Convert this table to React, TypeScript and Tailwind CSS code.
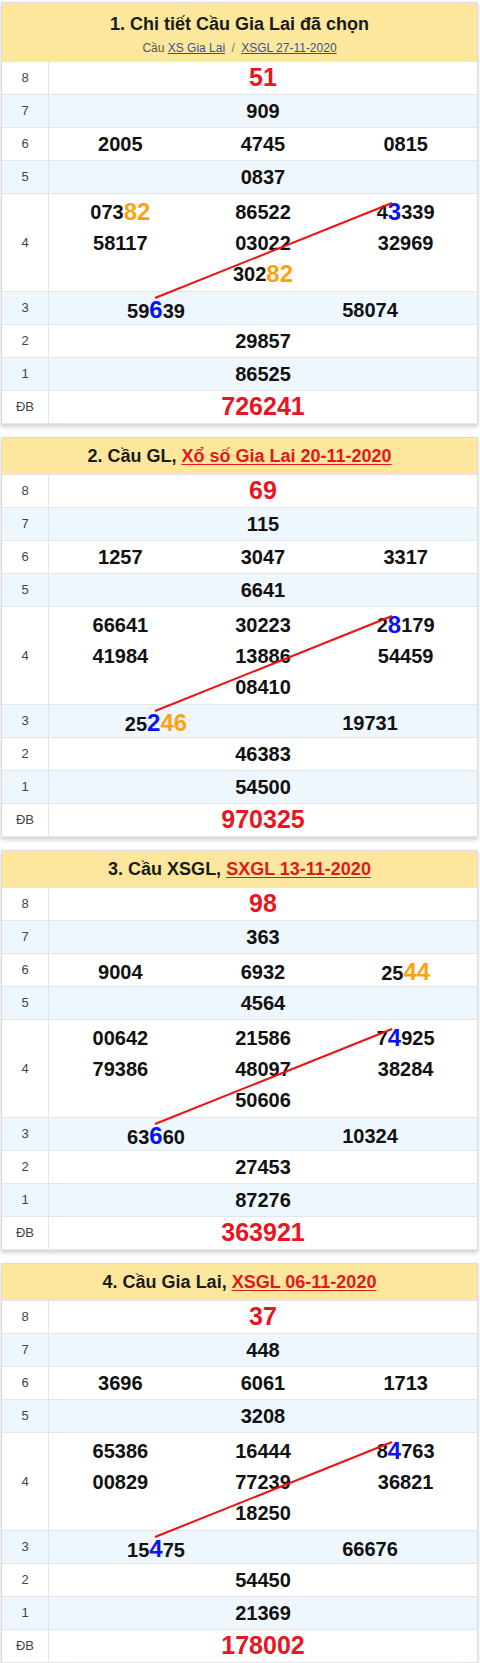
import React from "react";

type Card = {
  title: React.ReactNode;
  rows: {
    g8: string;
    g7: string;
    g6: string[];
    g5: string;
    g4: string[][];
    g3: string[];
    g2: string;
    g1: string;
    db: string;
  };
};

// "{..}" = orange digits, "<..>" = blue digits
const renderNum = (s: string) => {
  const parts: React.ReactNode[] = [];
  const re = /(\{[^}]*\}|<[^>]*>)/g;
  let last = 0;
  let m: RegExpExecArray | null;
  let i = 0;
  while ((m = re.exec(s))) {
    if (m.index > last) parts.push(<span key={i++}>{s.slice(last, m.index)}</span>);
    const inner = m[0].slice(1, -1);
    if (m[0][0] === "{") {
      parts.push(
        <span key={i++} className="text-[24px] text-[#ffa20f]">
          {inner}
        </span>
      );
    } else {
      parts.push(
        <span key={i++} className="text-[24px] text-[#0b12f5]">
          {inner}
        </span>
      );
    }
    last = m.index + m[0].length;
  }
  if (last < s.length) parts.push(<span key={i++}>{s.slice(last)}</span>);
  return parts;
};

const Row = ({
  label,
  blue,
  children,
}: {
  label: string;
  blue?: boolean;
  children: React.ReactNode;
}) => (
  <div
    className={`flex border-b border-[#e2e5ea] ${blue ? "bg-[#eef6fe]" : "bg-white"}`}
  >
    <div className="w-[47px] shrink-0 flex items-center justify-center border-r border-[#e2e5ea] text-[13px] text-[#444]">
      {label}
    </div>
    <div className="flex-1 min-w-0">{children}</div>
  </div>
);

const Single = ({ v, red }: { v: string; red?: boolean }) => (
  <div
    className={`h-[32px] flex items-center justify-center font-bold ${
      red ? "text-[25px] text-[#e8161e]" : "text-[20px] text-[#111]"
    }`}
  >
    {renderNum(v)}
  </div>
);

const Result = ({ card }: { card: Card }) => {
  const r = card.rows;
  return (
    <div className="bg-white border border-[#dcdcdc] shadow-[0_2px_4px_rgba(0,0,0,0.18)]">
      {card.title}
      <div className="relative">
        <Row label="8">
          <Single v={r.g8} red />
        </Row>
        <Row label="7" blue>
          <Single v={r.g7} />
        </Row>
        <Row label="6">
          <div className="grid grid-cols-3 h-[32px] items-center text-center text-[20px] font-bold text-[#111]">
            {r.g6.map((n, i) => (
              <div key={i}>{renderNum(n)}</div>
            ))}
          </div>
        </Row>
        <Row label="5" blue>
          <Single v={r.g5} />
        </Row>
        <Row label="4">
          <div className="grid grid-cols-3 py-[2px] text-center text-[20px] font-bold text-[#111]">
            {r.g4.flat().map((n, i) => (
              <div key={i} className="h-[31px] flex items-center justify-center">
                {renderNum(n)}
              </div>
            ))}
          </div>
        </Row>
        <Row label="3" blue>
          <div className="grid grid-cols-2 h-[32px] items-center text-center text-[20px] font-bold text-[#111]">
            {r.g3.map((n, i) => (
              <div key={i}>{renderNum(n)}</div>
            ))}
          </div>
        </Row>
        <Row label="2">
          <Single v={r.g2} />
        </Row>
        <Row label="1" blue>
          <Single v={r.g1} />
        </Row>
        <Row label="ĐB">
          <Single v={r.db} red />
        </Row>
        <svg
          className="absolute left-0 top-0 pointer-events-none"
          width="475"
          height="300"
        >
          <line x1="153" y1="236" x2="390" y2="141" stroke="#f01010" strokeWidth="2" />
        </svg>
      </div>
    </div>
  );
};

const Head = ({ children }: { children: React.ReactNode }) => (
  <div className="h-[37px] bg-[#fde79c] border-b border-[#e2e5ea] flex items-center justify-center text-[18px] font-bold text-[#1a1a1a]">
    {children}
  </div>
);

const RedLink = ({ children }: { children: React.ReactNode }) => (
  <a href="#" className="text-[#e3171f] underline underline-offset-2">
    {children}
  </a>
);

const CARDS: Card[] = [
  {
    title: (
      <div className="h-[59px] bg-[#fde79c] border-b border-[#e2e5ea] flex flex-col items-center pt-[9px]">
        <div className="text-[18px] font-bold text-[#1a1a1a] leading-[24px]">
          1. Chi tiết Cầu Gia Lai đã chọn
        </div>
        <div className="text-[12px] text-[#555] leading-[18px] mt-[3px]">
          Cầu{" "}
          <a href="#" className="text-[#3a4ea6] underline">
            XS Gia Lai
          </a>{" "}
          <span className="mx-[3px] text-[#777]">/</span>{" "}
          <a href="#" className="text-[#3a4ea6] underline">
            XSGL 27-11-2020
          </a>
        </div>
      </div>
    ),
    rows: {
      g8: "51",
      g7: "909",
      g6: ["2005", "4745", "0815"],
      g5: "0837",
      g4: [
        ["073{82}", "86522", "4<3>339"],
        ["58117", "03022", "32969"],
        ["", "302{82}", ""],
      ],
      g3: ["59<6>39", "58074"],
      g2: "29857",
      g1: "86525",
      db: "726241",
    },
  },
  {
    title: (
      <Head>
        <span>
          2. Cầu GL, <RedLink>Xổ số Gia Lai 20-11-2020</RedLink>
        </span>
      </Head>
    ),
    rows: {
      g8: "69",
      g7: "115",
      g6: ["1257", "3047", "3317"],
      g5: "6641",
      g4: [
        ["66641", "30223", "2<8>179"],
        ["41984", "13886", "54459"],
        ["", "08410", ""],
      ],
      g3: ["25<2>{46}", "19731"],
      g2: "46383",
      g1: "54500",
      db: "970325",
    },
  },
  {
    title: (
      <Head>
        <span>
          3. Cầu XSGL, <RedLink>SXGL 13-11-2020</RedLink>
        </span>
      </Head>
    ),
    rows: {
      g8: "98",
      g7: "363",
      g6: ["9004", "6932", "25{44}"],
      g5: "4564",
      g4: [
        ["00642", "21586", "7<4>925"],
        ["79386", "48097", "38284"],
        ["", "50606", ""],
      ],
      g3: ["63<6>60", "10324"],
      g2: "27453",
      g1: "87276",
      db: "363921",
    },
  },
  {
    title: (
      <Head>
        <span>
          4. Cầu Gia Lai, <RedLink>XSGL 06-11-2020</RedLink>
        </span>
      </Head>
    ),
    rows: {
      g8: "37",
      g7: "448",
      g6: ["3696", "6061", "1713"],
      g5: "3208",
      g4: [
        ["65386", "16444", "8<4>763"],
        ["00829", "77239", "36821"],
        ["", "18250", ""],
      ],
      g3: ["15<4>75", "66676"],
      g2: "54450",
      g1: "21369",
      db: "178002",
    },
  },
];

export default function App() {
  return (
    <div
      className="w-[480px] bg-white pt-[2px] pl-[1px] pr-[2px] flex flex-col gap-[12px]"
      style={{ fontFamily: '"Liberation Sans", Arial, sans-serif' }}
    >
      {CARDS.map((c, i) => (
        <Result key={i} card={c} />
      ))}
    </div>
  );
}
